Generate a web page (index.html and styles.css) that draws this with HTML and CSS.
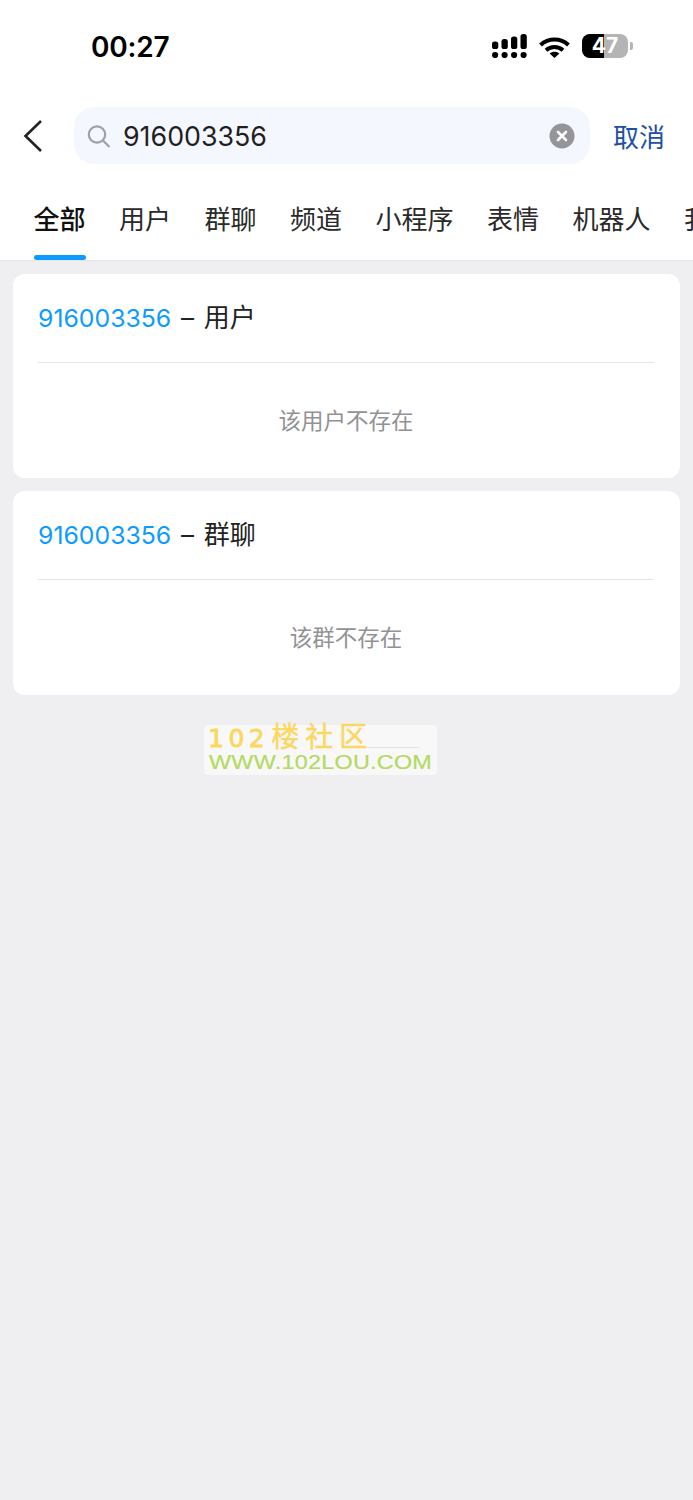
FILE: index.html
```html
<!DOCTYPE html>
<html lang="zh-CN">
<head>
    <meta charset="UTF-8">
    <meta name="viewport" content="width=device-width, initial-scale=1.0">
    <title>搜索</title>
    <link rel="stylesheet" href="styles.css">
</head>
<body>
    <div class="top">
        <div class="status-bar">
            <span class="time">00:27</span>
            <div class="status-icons">
                <svg class="signal" width="35" height="24" viewBox="0 0 35 24">
                    <g fill="#000">
                        <rect x="0" y="7.5" width="6.3" height="7.5" rx="2.6"/>
                        <rect x="9.5" y="5" width="6.3" height="10" rx="2.6"/>
                        <rect x="19" y="2.5" width="6.3" height="12.5" rx="2.6"/>
                        <rect x="28.5" y="0" width="6.3" height="15" rx="2.6"/>
                        <circle cx="3.1" cy="21" r="3.1"/>
                        <circle cx="12.6" cy="21" r="3.1"/>
                        <circle cx="22.1" cy="21" r="3.1"/>
                        <circle cx="31.6" cy="21" r="3.1"/>
                    </g>
                </svg>
                <svg class="wifi" width="31" height="21" viewBox="0 0 31 21">
                    <g fill="none" stroke="#000" stroke-width="4">
                        <path d="M1.5 8C9.5 .8 21.5 .8 29.5 8"/>
                        <path d="M7 13.2C12 9 19 9 24 13.2"/>
                    </g>
                    <path d="M10.6 16.6C13.5 14.2 17.5 14.2 20.4 16.6L15.5 21Z" fill="#000"/>
                </svg>
                <div class="battery">
                    <div class="battery-body">
                        <div class="battery-fill"></div>
                        <span class="battery-num">47</span>
                    </div>
                    <div class="battery-tip"></div>
                </div>
            </div>
        </div>
        <div class="search-row">
            <svg class="back" width="22" height="34" viewBox="0 0 22 34">
                <path d="M19 2L3.5 17L19 32" fill="none" stroke="#222" stroke-width="2.6"/>
            </svg>
            <div class="search-box">
                <svg class="search-icon" width="24" height="24" viewBox="0 0 24 24">
                    <circle cx="10" cy="10.5" r="8.2" fill="none" stroke="#a0a0a5" stroke-width="2.2"/>
                    <path d="M16 16.5L22.5 23" fill="none" stroke="#a0a0a5" stroke-width="2.2"/>
                </svg>
                <span class="search-text">916003356</span>
                <svg class="clear" width="26" height="26" viewBox="0 0 26 26">
                    <circle cx="13" cy="13" r="12.5" fill="#949499"/>
                    <path d="M9 9L17 17M17 9L9 17" stroke="#fff" stroke-width="2.6" stroke-linecap="round"/>
                </svg>
            </div>
            <span class="cancel">取消</span>
        </div>
        <div class="tabs">
            <span class="tab active">全部</span>
            <span class="tab">用户</span>
            <span class="tab">群聊</span>
            <span class="tab">频道</span>
            <span class="tab">小程序</span>
            <span class="tab">表情</span>
            <span class="tab">机器人</span>
            <span class="tab">我的</span>
        </div>
    </div>

    <div class="results">
        <div class="card">
            <div class="card-title"><span class="keyword">916003356</span> – 用户</div>
            <div class="card-empty">该用户不存在</div>
        </div>
        <div class="card">
            <div class="card-title"><span class="keyword">916003356</span> – 群聊</div>
            <div class="card-empty">该群不存在</div>
        </div>
    </div>

    <!-- site watermark pasted over the screenshot -->
    <div class="watermark">
        <div class="wm-line"></div>
        <div class="wm-name">102<span class="wm-cjk">楼社区</span></div>
        <div class="wm-url">WWW.102LOU.COM</div>
    </div>
</body>
</html>
```

FILE: styles.css
```css
* {
    box-sizing: border-box;
}
html, body {
    height: 100%;
}
body {
    margin: 0;
    position: relative;
    overflow: hidden;
    background-color: #efeff2;
    font-family: Inter, "Noto Sans CJK SC", sans-serif;
    color: #1a1a1a;
}
.top {
    background: white;
    height: 261px;
    border-bottom: 1px solid #e4e4e7;
    overflow: hidden;
}
.status-bar {
    height: 107px;
    padding: 31px 60px 0 91px;
    display: flex;
    justify-content: space-between;
    align-items: flex-start;
}
.time {
    font-size: 28px;
    line-height: 32px;
    font-weight: 600;
    color: #000;
    letter-spacing: -0.2px;
}
.status-icons {
    display: flex;
    align-items: flex-start;
    gap: 12px;
    padding-top: 3px;
}
.wifi {
    margin-top: 3px;
}
.battery {
    display: flex;
    align-items: center;
    height: 24px;
}
.battery-body {
    position: relative;
    width: 46px;
    height: 24px;
    border-radius: 8px;
    background: #b4b4b4;
    overflow: hidden;
    text-align: center;
}
.battery-fill {
    width: 22px;
    height: 100%;
    background: #000;
}
.battery-num {
    position: absolute;
    left: 0;
    right: 0;
    top: 0;
    font-size: 21px;
    line-height: 24px;
    font-weight: 700;
    color: white;
}
.battery-tip {
    width: 3px;
    height: 8px;
    margin-left: 2px;
    border-radius: 0 2px 2px 0;
    background: #b4b4b4;
}
.search-row {
    display: flex;
    align-items: center;
    height: 57px;
    padding-left: 22px;
}
.back {
    margin-right: 30px;
}
.search-box {
    width: 516px;
    height: 57px;
    display: flex;
    align-items: center;
    padding: 0 15px 0 13px;
    border-radius: 20px;
    background: #f4f7fe;
}
.search-icon {
    margin-right: 12px;
}
.search-text {
    flex: 1;
    font-size: 26.8px;
    color: #1f1f1f;
}
.cancel {
    margin-left: 23px;
    font-size: 26px;
    color: #214ea6;
}
.tabs {
    display: flex;
    gap: 33.5px;
    padding: 0 0 0 33.5px;
    margin-top: 29px;
    white-space: nowrap;
}
.tab {
    flex: none;
    height: 67px;
    padding-top: 7px;
    font-size: 26px;
    line-height: 40px;
    color: #2a2a2a;
}
.tab.active {
    color: #111;
    font-weight: 500;
    position: relative;
}
.tab.active::after {
    content: "";
    position: absolute;
    left: 0;
    right: 0;
    top: 62px;
    height: 5px;
    border-radius: 3px;
    background: #0d9bff;
}
.results {
    display: flex;
    flex-direction: column;
    gap: 13px;
    padding: 13px 13px 0;
}
.card {
    height: 204px;
    padding: 0 26px 0 25px;
    border-radius: 12px;
    background: white;
}
.card-title {
    height: 89px;
    border-bottom: 1px solid #e5e5e7;
    font-size: 26px;
    line-height: 87px;
    word-spacing: 2.5px;
    color: #222;
}
.keyword {
    font-size: 24.8px;
    color: #0d9bff;
}
.card-empty {
    padding-top: 41px;
    text-align: center;
    font-size: 22.5px;
    line-height: 34px;
    color: #929295;
}
.watermark {
    position: absolute;
    left: 204px;
    top: 725px;
    width: 233px;
    height: 50px;
    border-radius: 4px;
    background: rgba(255,255,255,0.55);
}
.wm-line {
    position: absolute;
    left: 140px;
    top: 22px;
    width: 76px;
    height: 1px;
    background: #e3e3e3;
}
.wm-name {
    position: absolute;
    left: 4px;
    top: 0;
    font-family: "DejaVu Sans", "Noto Sans CJK SC", sans-serif;
    font-size: 25px;
    line-height: 26px;
    letter-spacing: 4.5px;
    -webkit-text-stroke: 0.8px #fbd75e;
    color: #fbd75e;
    white-space: nowrap;
}
.wm-cjk {
    margin-left: 2px;
    font-size: 28px;
    font-weight: 400;
    letter-spacing: 6px;
    -webkit-text-stroke: 0.4px #fbd75e;
}
.wm-url {
    position: absolute;
    left: 5px;
    top: 27px;
    font-family: "Liberation Sans", sans-serif;
    font-size: 19.5px;
    line-height: 20px;
    letter-spacing: 0.2px;
    -webkit-text-stroke: 0.2px #b3da62;
    color: #b3da62;
    white-space: nowrap;
    transform: scaleX(1.2);
    transform-origin: left center;
}
```
